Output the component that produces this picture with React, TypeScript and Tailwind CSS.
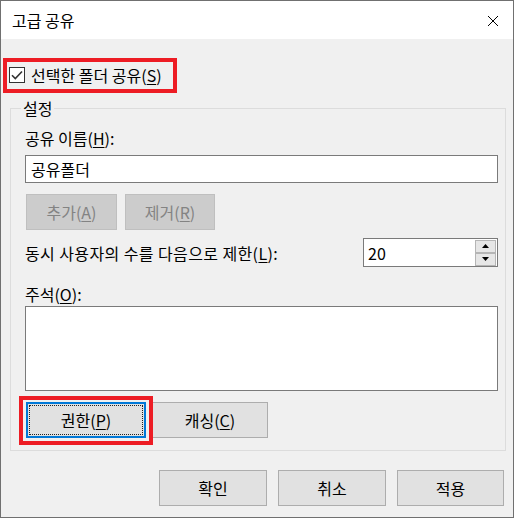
const font = { fontFamily: '"Noto Sans CJK KR", "Noto Sans", sans-serif' };

function Mn({ children }: { children: string }) {
  return <span className="underline underline-offset-2 decoration-1">{children}</span>;
}

function Btn({
  children,
  w,
  disabled,
  className = "",
}: {
  children: React.ReactNode;
  w: string;
  disabled?: boolean;
  className?: string;
}) {
  return (
    <div
      className={`${w} h-[36px] flex items-center justify-center border text-[16px] ${
        disabled
          ? "bg-[#cccccc] border-[#bfbfbf] text-[#838383]"
          : "bg-[#e1e1e1] border-[#adadad] text-black"
      } ${className}`}
    >
      {children}
    </div>
  );
}

export default function App() {
  return (
    <div className="w-[515px] h-[519px] bg-white leading-[20px]" style={font}>
      <div className="w-[514px] h-[518px] border border-[#707070] flex flex-col">
        {/* Title bar */}
        <div className="h-[38px] bg-white flex items-center justify-between pl-[11px] pr-[14px]">
          <span className="text-[16px] text-black">고급 공유</span>
          <svg width="12" height="12" viewBox="0 0 12 12" className="mt-[1px]">
            <path d="M1 1 L11 11 M11 1 L1 11" stroke="#000" strokeWidth="1" fill="none" />
          </svg>
        </div>

        <div className="flex-1 bg-[#f0f0f0] flex flex-col">
          {/* Share checkbox, highlighted */}
          <div className="ml-[2px] mt-[19px] w-[174px] h-[35px] border-4 border-[#ed1c24] flex items-center pl-[2px] gap-[6px]">
            <svg width="16" height="16" viewBox="0 0 16 16" className="mt-[-2px]">
              <rect x="0.5" y="0.5" width="15" height="15" fill="#fff" stroke="#333" />
              <path d="M3 8.2 L6.3 11.5 L13 4.5" stroke="#333" strokeWidth="1.6" fill="none" />
            </svg>
            <span className="text-[16px] text-black whitespace-nowrap mt-[-2px]">
              선택한 폴더 공유(<Mn>S</Mn>)
            </span>
          </div>

          {/* Settings group */}
          <div className="relative ml-[9px] mt-[15px] w-[496px] h-[343px] border border-[#dcdcdc] pl-[14px] pr-[7px] pt-[19px] flex flex-col">
            <span className="absolute left-[10px] top-[-11px] px-[2px] bg-[#f0f0f0] text-[16px] text-black">
              설정
            </span>

            <span className="text-[16px] text-black">
              공유 이름(<Mn>H</Mn>):
            </span>
            <div className="mt-[7px] h-[28px] bg-white border border-[#7a7a7a] flex items-center pl-[5px] text-[16px] text-black">
              공유폴더
            </div>

            <div className="mt-[11px] ml-[1px] flex gap-[8px]">
              <Btn w="w-[91px]" disabled>
                추가(<Mn>A</Mn>)
              </Btn>
              <Btn w="w-[90px]" disabled>
                제거(<Mn>R</Mn>)
              </Btn>
            </div>

            <div className="mt-[8px] flex items-center justify-between">
              <span className="text-[16px] text-black whitespace-nowrap tracking-[0.4px]">
                동시 사용자의 수를 다음으로 제한(<Mn>L</Mn>):
              </span>
              <div className="w-[135px] h-[29px] bg-white border border-[#7a7a7a] flex items-center justify-between pl-[4px] pr-[1px]">
                <span className="text-[16px] text-black">20</span>
                <div className="flex flex-col gap-0">
                  <div className="w-[21px] h-[13px] bg-[#e6e6e6] border border-[#b5b5b5] flex items-center justify-center">
                    <svg width="7" height="4" viewBox="0 0 7 4">
                      <path d="M0 4 L3.5 0 L7 4 Z" fill="#000" />
                    </svg>
                  </div>
                  <div className="w-[21px] h-[13px] bg-[#e6e6e6] border border-[#b5b5b5] flex items-center justify-center">
                    <svg width="7" height="4" viewBox="0 0 7 4">
                      <path d="M0 0 L7 0 L3.5 4 Z" fill="#000" />
                    </svg>
                  </div>
                </div>
              </div>
            </div>

            <span className="mt-[17px] text-[16px] text-black">
              주석(<Mn>O</Mn>):
            </span>
            <div className="mt-[2px] h-[85px] bg-white border border-[#7a7a7a]" />

            <div className="relative mt-[11px] ml-[1px] flex">
              <div className="w-[120px] h-[36px] bg-[#e1e1e1] border-2 border-[#0078d7] p-[1px]">
                <div className="w-full h-full border border-dotted border-[#222] flex items-center justify-center text-[16px] text-black">
                  권한(<Mn>P</Mn>)
                </div>
              </div>
              <Btn w="w-[116px]" className="ml-[6px]">
                캐싱(<Mn>C</Mn>)
              </Btn>
              {/* highlight annotation */}
              <div className="absolute left-[-7px] top-[-6px] w-[134px] h-[49px] border-4 border-[#ed1c24]" />
            </div>
          </div>

          {/* Dialog buttons */}
          <div className="mt-[19px] flex justify-end gap-[11px] pr-[9px]">
            <Btn w="w-[108px]">확인</Btn>
            <Btn w="w-[108px]">취소</Btn>
            <Btn w="w-[107px]">적용</Btn>
          </div>
        </div>
      </div>
    </div>
  );
}
